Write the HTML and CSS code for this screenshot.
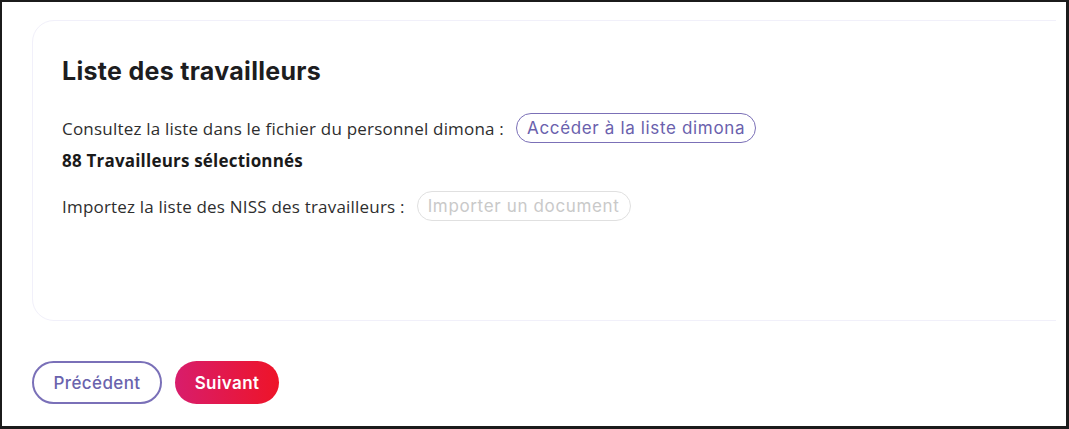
FILE: index.html
```html
<!DOCTYPE html>
<html lang="fr">
<head>
<meta charset="utf-8">
<title>Liste des travailleurs</title>
<link rel="stylesheet" href="styles.css">
</head>
<body>
<div class="frame">
  <div class="clip">
    <section class="card">
      <h2 class="title">Liste des travailleurs</h2>
      <div class="row">
        <span class="label">Consultez la liste dans le fichier du personnel dimona :</span>
        <button class="pill pill-active">Accéder à la liste dimona</button>
      </div>
      <div class="count">88 Travailleurs sélectionnés</div>
      <div class="row row-import">
        <span class="label">Importez la liste des NISS des travailleurs :</span>
        <button class="pill pill-disabled">Importer un document</button>
      </div>
    </section>
  </div>
  <div class="actions">
    <button class="btn btn-outline">Précédent</button>
    <button class="btn btn-primary">Suivant</button>
  </div>
</div>
</body>
</html>
```

FILE: styles.css
```css
html, body {
  margin: 0;
  padding: 0;
  background: #ffffff;
}
.frame {
  box-sizing: border-box;
  width: 1069px;
  height: 429px;
  border: 2px solid #1b1b1b;
  border-right-width: 3px;
  border-bottom-width: 3px;
  background: #ffffff;
  overflow: hidden;
}
.clip {
  width: 1054px;
  padding-top: 18px;
  padding-left: 30px;
  box-sizing: border-box;
  overflow: hidden;
}
.card {
  box-sizing: border-box;
  width: 1100px;
  height: 301px;
  border: 1px solid #f1f0fa;
  border-radius: 22px;
  padding: 34px 29px 0;
}
.title {
  margin: 0;
  font-family: "Inter", "DejaVu Sans", sans-serif;
  font-weight: 700;
  font-size: 25px;
  line-height: 32px;
  color: #1d1d1f;
  letter-spacing: 0.3px;
}
.row {
  display: flex;
  align-items: center;
  gap: 12px;
  margin-top: 26px;
  height: 30px;
}
.row-import {
  margin-top: 20px;
}
.label, .count {
  font-family: "Open Sans", "Liberation Sans", sans-serif;
  font-size: 17px;
  letter-spacing: 0.2px;
  color: #2e2e2e;
}
.count {
  font-weight: 700;
  color: #1a1a1a;
  line-height: 20px;
  margin-top: 8px;
}
.pill {
  box-sizing: border-box;
  display: inline-flex;
  align-items: center;
  height: 30px;
  padding: 0 10px;
  border-radius: 15px;
  background: #ffffff;
  font-family: "Inter", "DejaVu Sans", sans-serif;
  font-size: 17px;
  letter-spacing: 0.65px;
}
.pill-active {
  border: 1.5px solid #7b70b7;
  color: #6a61ad;
}
.pill-disabled {
  border: 1.5px solid #e0e0e0;
  color: #c9c9c9;
}
.actions {
  display: flex;
  gap: 13px;
  padding-left: 30px;
  margin-top: 40px;
}
.btn {
  box-sizing: border-box;
  height: 43px;
  border-radius: 22px;
  font-family: "Inter", "DejaVu Sans", sans-serif;
  font-size: 17px;
  letter-spacing: 0.4px;
}
.btn-outline {
  width: 130px;
  border: 2px solid #7a70b8;
  background: #ffffff;
  color: #6a63ad;
  font-weight: 500;
}
.btn-primary {
  width: 104px;
  border: none;
  background: linear-gradient(90deg, #d81d6c 0%, #ee1428 100%);
  color: #ffffff;
  font-weight: 600;
}
```
